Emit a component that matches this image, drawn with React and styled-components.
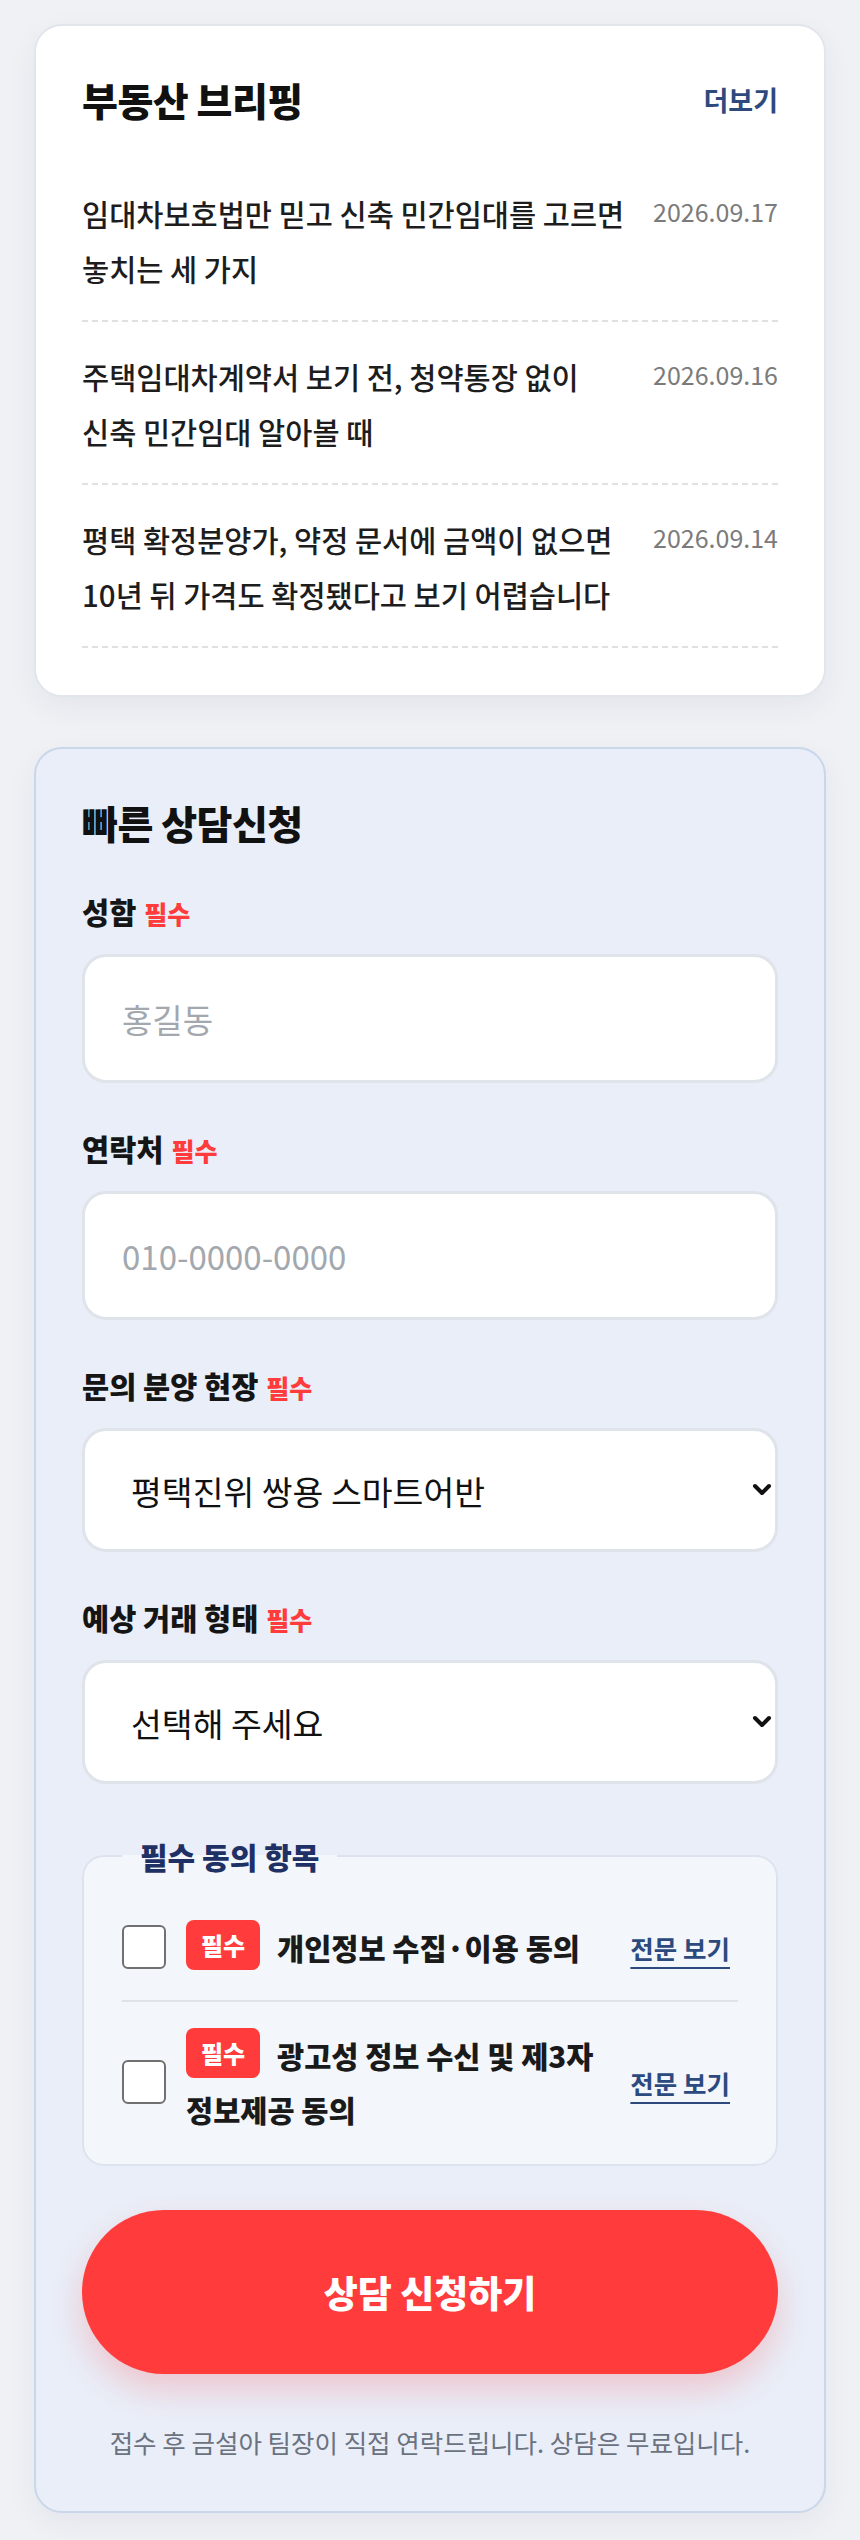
import React from "react";
import styled, { createGlobalStyle } from "styled-components";

const GlobalStyle = createGlobalStyle`
  * { box-sizing: border-box; }
  body {
    margin: 0;
    background: #eff1f5;
    font-family: "Noto Sans CJK KR", "Noto Sans", sans-serif;
    color: #151515;
  }
`;

const Page = styled.main`
  display: flex;
  flex-direction: column;
  gap: 50px;
  padding: 24px 34px 26px;
`;

const Card = styled.section`
  border-radius: 28px;
  padding: 50px 46px ${(p) => (p.$tone === "blue" ? "51px" : "47px")};
  background: ${(p) => (p.$tone === "blue" ? "#e9eef8" : "#ffffff")};
  border: 2px solid ${(p) => (p.$tone === "blue" ? "#cad6ea" : "#e2e6ec")};
  box-shadow: 0 10px 30px rgba(30, 50, 90, 0.06);
`;

const CardHeader = styled.div`
  display: flex;
  justify-content: space-between;
  align-items: center;
  margin-bottom: 37px;
`;

const CardTitle = styled.h2`
  margin: 0;
  font-size: 39px;
  line-height: 46px;
  font-weight: 900;
  color: #111;
  letter-spacing: -0.5px;
`;

const MoreLink = styled.a`
  font-size: 27px;
  font-weight: 700;
  color: #2e4a7d;
  text-decoration: none;
`;

const NewsList = styled.ul`
  list-style: none;
  margin: 0;
  padding: 0;
`;

const NewsItem = styled.li`
  display: flex;
  align-items: flex-start;
  gap: 24px;
  padding: 27px 0 24px;
  border-bottom: 2px dashed #e1e1e1;
`;

const NewsTitle = styled.a`
  flex: 1;
  font-size: 29.5px;
  line-height: 55px;
  font-weight: 500;
  color: #1d1d1d;
  text-decoration: none;
  word-break: keep-all;
`;

const NewsDate = styled.span`
  flex-shrink: 0;
  font-size: 25px;
  line-height: 50px;
  color: #7b7b7b;
`;

const FormTitle = styled(CardTitle)`
  margin-bottom: 46px;
`;

const Field = styled.div`
  margin-bottom: 45px;
`;

const Label = styled.label`
  display: flex;
  align-items: baseline;
  height: 40px;
  margin-bottom: 23px;
  font-size: 29.5px;
  line-height: 40px;
  font-weight: 800;
  color: #151515;
`;

const Required = styled.span`
  margin-left: 8px;
  font-size: 25px;
  line-height: 40px;
  font-weight: 800;
  color: #ff3b3b;
`;

const TextInput = styled.input`
  display: block;
  width: 100%;
  height: 129px;
  padding: 0 37px;
  border: 3px solid #dfe3ea;
  border-radius: 24px;
  background: #fff;
  font-family: inherit;
  font-size: 33px;
  color: #111;
  outline: none;

  &::placeholder {
    color: #a3a7ae;
  }
`;

const SelectWrap = styled.div`
  position: relative;
`;

const Select = styled.select`
  display: block;
  width: 100%;
  height: 124px;
  padding: 0 60px 0 46px;
  border: 3px solid #dfe3ea;
  border-radius: 24px;
  background: #fff;
  font-family: inherit;
  font-size: 33.5px;
  color: #111;
  appearance: none;
  outline: none;
`;

const Chevron = styled.svg`
  position: absolute;
  right: 6px;
  top: 50%;
  transform: translateY(-50%);
  pointer-events: none;
`;

const Consent = styled.fieldset`
  margin: 52px 0 0;
  padding: 18px 38px 2px;
  min-width: 0;
  border: 2px solid #dde3ee;
  border-radius: 22px;
  background: #f3f6fb;
`;

const Legend = styled.legend`
  padding: 0 18px;
  font-size: 30px;
  line-height: 40px;
  font-weight: 800;
  color: #1f3064;
`;

const ConsentRow = styled.div`
  display: flex;
  align-items: center;
  padding: 26px 8px 26px 0;

  & + & {
    border-top: 2px solid #dfe3e9;
  }
`;

const Checkbox = styled.input`
  flex-shrink: 0;
  width: 44px;
  height: 44px;
  margin: 0;
  border: 2px solid #707070;
  border-radius: 6px;
  background: #fff;
  appearance: none;
`;

const ConsentText = styled.span`
  flex: 1;
  margin-left: 20px;
  font-size: 29.5px;
  line-height: 54px;
  font-weight: 800;
  color: #1a1a1a;
  word-break: keep-all;
`;

const Badge = styled.span`
  display: inline-flex;
  align-items: center;
  justify-content: center;
  width: 74px;
  height: 50px;
  margin-right: 17px;
  border-radius: 8px;
  background: #ff3b3b;
  color: #fff;
  font-size: 24px;
  line-height: 1;
  font-weight: 800;
  vertical-align: top;
`;

const ViewLink = styled.a`
  flex-shrink: 0;
  margin-left: 20px;
  font-size: 25.5px;
  font-weight: 700;
  color: #2c4a7e;
  white-space: nowrap;
  text-decoration: underline;
  text-decoration-thickness: 2px;
  text-underline-offset: 8px;
`;

const SubmitButton = styled.button`
  display: block;
  width: 100%;
  height: 164px;
  margin-top: 44px;
  border: none;
  border-radius: 82px;
  background: #ff3b3b;
  color: #fff;
  font-family: inherit;
  font-size: 37px;
  font-weight: 800;
  box-shadow: 0 16px 32px rgba(255, 59, 59, 0.22);
`;

const Note = styled.p`
  margin: 50px 0 0;
  text-align: center;
  font-size: 25.5px;
  line-height: 36px;
  color: #6b7280;
`;

const news = [
  { title: "임대차보호법만 믿고 신축 민간임대를 고르면 놓치는 세 가지", date: "2026.09.17" },
  { title: "주택임대차계약서 보기 전, 청약통장 없이 신축 민간임대 알아볼 때", date: "2026.09.16" },
  { title: "평택 확정분양가, 약정 문서에 금액이 없으면 10년 뒤 가격도 확정됐다고 보기 어렵습니다", date: "2026.09.14" },
];

const consents = ["개인정보 수집·이용 동의", "광고성 정보 수신 및 제3자 정보제공 동의"];

const SelectField = ({ label, value }) => (
  <Field>
    <Label>
      {label}
      <Required>필수</Required>
    </Label>
    <SelectWrap>
      <Select defaultValue={value}>
        <option value={value}>{value}</option>
      </Select>
      <Chevron width="20" height="14" viewBox="0 0 20 14">
        <path d="M3 3 L10 10 L17 3" fill="none" stroke="#111" strokeWidth="4" strokeLinecap="round" strokeLinejoin="round" />
      </Chevron>
    </SelectWrap>
  </Field>
);

const App = () => {
  return (
    <>
      <GlobalStyle />
      <Page>
        <Card>
          <CardHeader>
            <CardTitle>부동산 브리핑</CardTitle>
            <MoreLink href="#">더보기</MoreLink>
          </CardHeader>
          <NewsList>
            {news.map((item) => (
              <NewsItem key={item.date}>
                <NewsTitle href="#">{item.title}</NewsTitle>
                <NewsDate>{item.date}</NewsDate>
              </NewsItem>
            ))}
          </NewsList>
        </Card>

        <Card $tone="blue">
          <FormTitle>빠른 상담신청</FormTitle>
          <Field>
            <Label>
              성함<Required>필수</Required>
            </Label>
            <TextInput placeholder="홍길동" />
          </Field>
          <Field>
            <Label>
              연락처<Required>필수</Required>
            </Label>
            <TextInput placeholder="010-0000-0000" />
          </Field>
          <SelectField label="문의 분양 현장" value="평택진위 쌍용 스마트어반" />
          <SelectField label="예상 거래 형태" value="선택해 주세요" />

          <Consent>
            <Legend>필수 동의 항목</Legend>
            {consents.map((text) => (
              <ConsentRow key={text}>
                <Checkbox type="checkbox" />
                <ConsentText>
                  <Badge>필수</Badge>
                  {text}
                </ConsentText>
                <ViewLink href="#">전문 보기</ViewLink>
              </ConsentRow>
            ))}
          </Consent>

          <SubmitButton type="button">상담 신청하기</SubmitButton>
          <Note>접수 후 금설아 팀장이 직접 연락드립니다. 상담은 무료입니다.</Note>
        </Card>
      </Page>
    </>
  );
};

export default App;
